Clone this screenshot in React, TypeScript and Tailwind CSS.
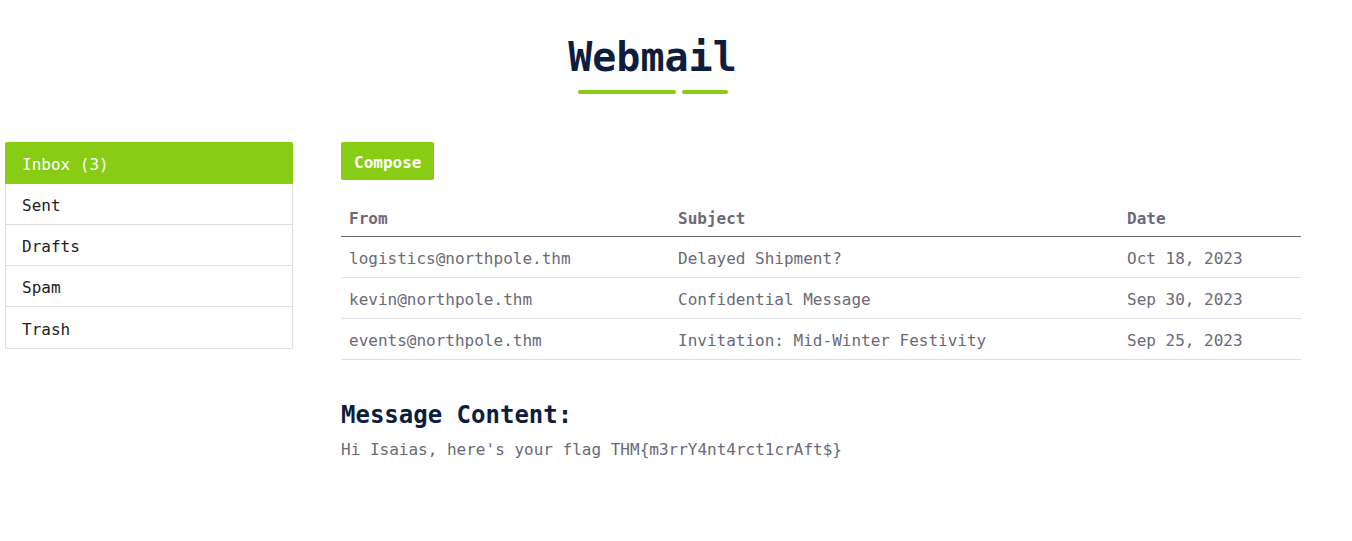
import React from "react";

const mono = { fontFamily: '"DejaVu Sans Mono", "Liberation Mono", monospace' };

const emails = [
  { from: "logistics@northpole.thm", subject: "Delayed Shipment?", date: "Oct 18, 2023" },
  { from: "kevin@northpole.thm", subject: "Confidential Message", date: "Sep 30, 2023" },
  { from: "events@northpole.thm", subject: "Invitation: Mid-Winter Festivity", date: "Sep 25, 2023" },
];

const folders = ["Sent", "Drafts", "Spam", "Trash"];

export default function App() {
  return (
    <div className="min-h-[541px] bg-white" style={mono}>
      <div className="w-[1305px]">
        <div className="flex flex-col items-center pt-[32px]">
          <h1 className="text-[40px] leading-[50px] font-bold text-[#0d1d3d]">Webmail</h1>
          <div className="flex gap-[6px] mt-[8px] ml-[1px]">
            <div className="h-[4px] w-[98px] rounded-full bg-[#88cc14]" />
            <div className="h-[4px] w-[46px] rounded-full bg-[#88cc14]" />
          </div>
        </div>

        <div className="flex mt-[48px]">
          <div className="ml-[5px] w-[288px] shrink-0">
            <div className="h-[42px] flex items-center pl-[17px] pt-[4px] bg-[#88cc14] text-white text-[16px] rounded-t-[2px]">
              Inbox (3)
            </div>
            <div className="border border-t-0 border-[#dddddd] rounded-b-[2px]">
              {folders.map((f, i) => (
                <div
                  key={f}
                  className={`h-[41px] flex items-center pl-[16px] pt-[4px] text-[16px] text-[#222222] ${i < folders.length - 1 ? "border-b border-[#dddddd]" : ""}`}
                >
                  {f}
                </div>
              ))}
            </div>
          </div>

          <div className="ml-[48px] w-[960px]">
            <button className="h-[38px] px-[13px] pt-[3px] bg-[#88cc14] text-white font-bold text-[16px] rounded-[2px]" style={mono}>
              Compose
            </button>

            <table className="w-[960px] mt-[20px] border-collapse text-[16px] text-[#6b6a78]">
              <thead>
                <tr className="border-b border-[#6b6a78]">
                  <th className="text-left font-bold px-[8px] pt-[2px] h-[36px] w-[329px]">From</th>
                  <th className="text-left font-bold px-[8px] pt-[2px] h-[36px] w-[449px]">Subject</th>
                  <th className="text-left font-bold px-[8px] pt-[2px] h-[36px]">Date</th>
                </tr>
              </thead>
              <tbody>
                {emails.map((e) => (
                  <tr key={e.from} className="border-b border-[#dee0e6]">
                    <td className="px-[8px] pt-[4px] h-[41px]">{e.from}</td>
                    <td className="px-[8px] pt-[4px] h-[41px]">{e.subject}</td>
                    <td className="px-[8px] pt-[4px] h-[41px]">{e.date}</td>
                  </tr>
                ))}
              </tbody>
            </table>

            <h2 className="mt-[40px] text-[24px] leading-[30px] font-bold text-[#0d1d3d]">Message Content:</h2>
            <p className="mt-[8px] text-[16px] leading-[24px] text-[#6b6a78]">
              Hi Isaias, here's your flag THM{"{"}m3rrY4nt4rct1crAft${"}"}
            </p>
          </div>
        </div>
      </div>
    </div>
  );
}
